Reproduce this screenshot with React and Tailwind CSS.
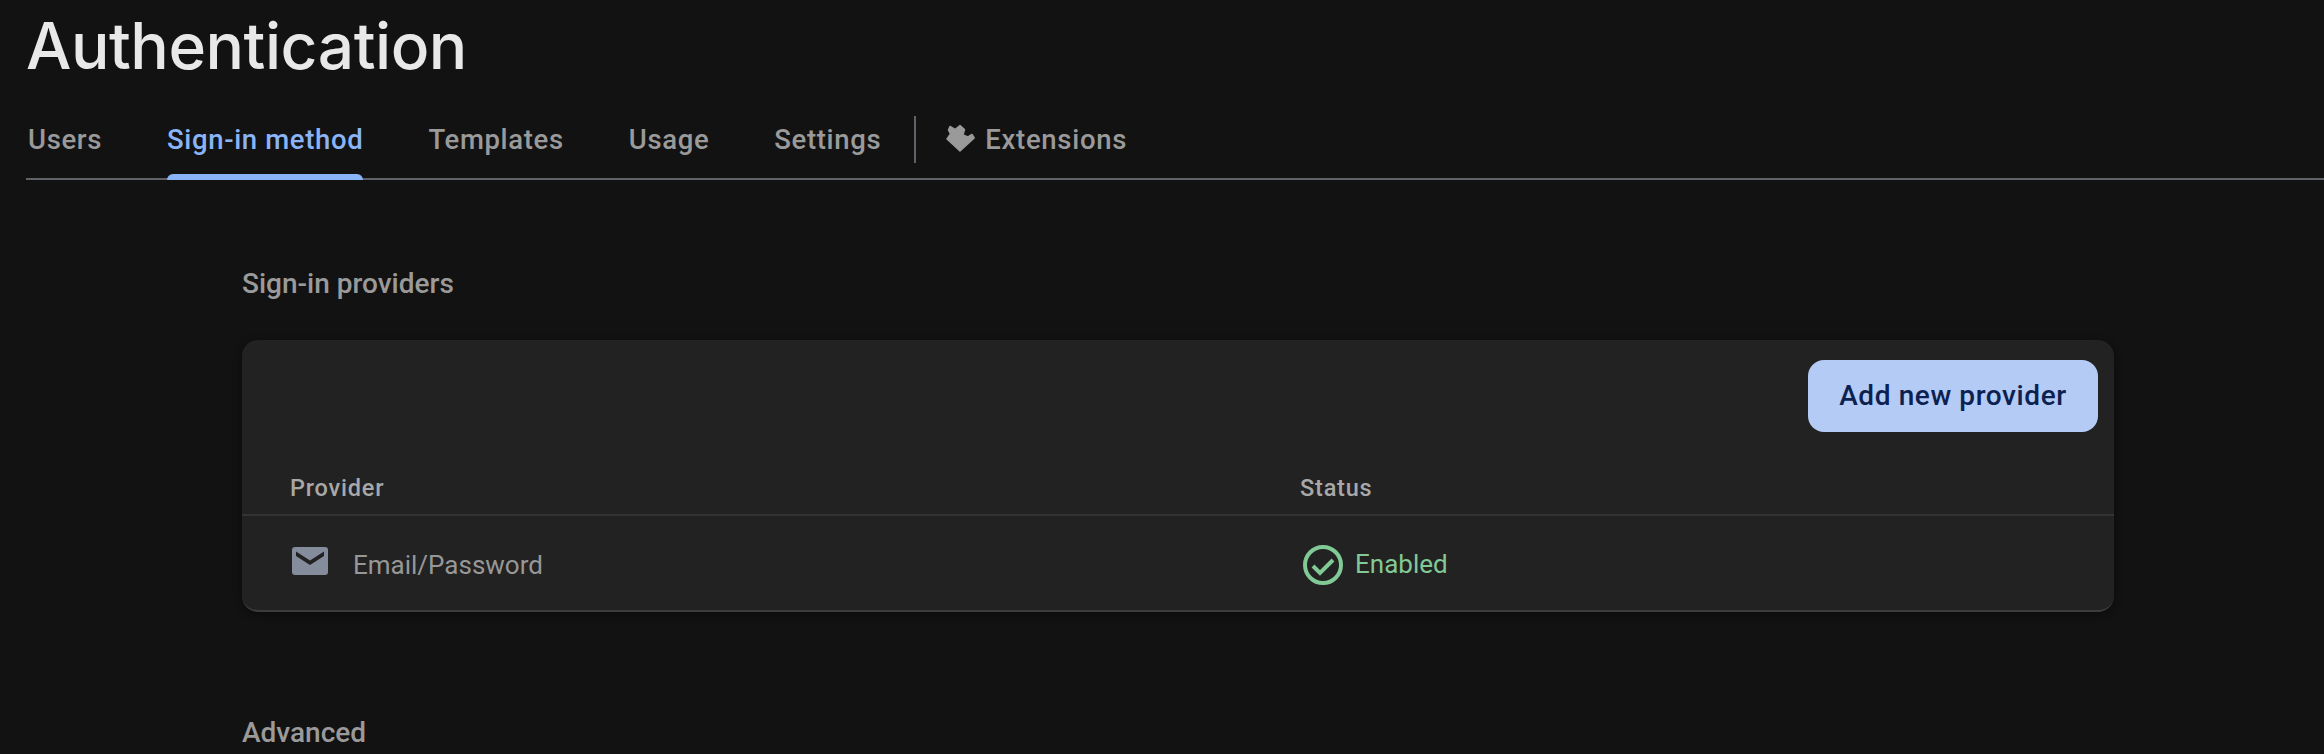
import React from 'react';

const tabs = ['Users', 'Sign-in method', 'Templates', 'Usage', 'Settings'];

const App = () => {
  return (
    <div className="h-[754px] overflow-hidden bg-[#121212] font-['Roboto',sans-serif]">
      {/* Header */}
      <div className="pl-[26px]">
        <h1 className="h-[82px] pt-[5px] text-[64px] leading-[82px] font-[450] tracking-[-0.45px] text-[#e8e8e8] font-['Inter',sans-serif]">
          Authentication
        </h1>

        {/* Tabs */}
        <div className="mt-[16px] flex h-[82px] items-stretch border-b-2 border-[#5f6368]">
          {tabs.map((tab) => (
            <div
              key={tab}
              className={`relative mr-[65px] flex items-center text-[27.5px] font-medium tracking-[0.65px] first:ml-[2px] ${tab === 'Sign-in method' ? 'text-[#8ab4f8]' : 'text-[#9a9a9a]'}`}
            >
              <span className="pt-[3px]">{tab}</span>
              {tab === 'Sign-in method' && (
                <span className="absolute -bottom-[2px] left-0 right-0 h-[6px] rounded-t-[6px] bg-[#8ab4f8]" />
              )}
            </div>
          ))}
          <div className="-ml-[32px] mt-[18px] mb-[15px] w-[2px] bg-[#5f6368]" />
          <div className="ml-[30px] flex items-center gap-[10px] text-[27.5px] font-medium tracking-[0.7px] text-[#9a9a9a]">
            <svg width="29" height="28" viewBox="0 0 29 28" fill="#9a9a9a" stroke="#9a9a9a" strokeWidth="1.5" strokeLinejoin="round">
              <path d="M4 2.500L9 5.500L14 1.500L18.500 5.500L17 11L22 13L26 10.500L28.200 14L14 27L1 15L4.500 10L2.500 6Z" />
            </svg>
            <span className="pt-[3px]">Extensions</span>
          </div>
        </div>
      </div>

      {/* Content */}
      <div className="mt-[88px] ml-[242px] w-[1872px]">
        <h2 className="text-[28px] leading-[32px] font-medium text-[#9a9a9a]">Sign-in providers</h2>

        <div className="mt-[40px] h-[272px] rounded-[16px] border-b-2 border-[#3c3c3c] bg-[#222222] shadow-[0_2px_8px_rgba(0,0,0,0.4)]">
          <div className="flex justify-end pt-[20px] pr-[16px]">
            <button className="h-[72px] w-[290px] rounded-[16px] bg-[#b3cbf5] text-[28px] font-medium tracking-[0.6px] text-[#0d2150]">
              Add new provider
            </button>
          </div>

          <div className="mt-[38px] flex h-[46px] items-center border-b-2 border-[#333333] pb-[6px] text-[23.5px] font-medium tracking-[0.8px] text-[#a8a8a8]">
            <div className="ml-[48px] w-[1010px]">Provider</div>
            <div>Status</div>
          </div>

          <div className="flex h-[94px] items-center pt-[3px] text-[26px] text-[#979797]">
            <div className="flex w-[1058px] items-center">
              <svg className="ml-[50px] mb-[8px]" width="36" height="28" viewBox="0 0 36 28" fill="#858c9c">
                <path d="M3 0h30a3 3 0 0 1 3 3v22a3 3 0 0 1-3 3H3a3 3 0 0 1-3-3V3a3 3 0 0 1 3-3zM4 4.500V9L18 18L32 9V4.500L18 13.500Z" fillRule="evenodd" />
              </svg>
              <span className="ml-[25px] pt-[2px]">Email/Password</span>
            </div>
            <div className="ml-[3px] flex items-center gap-[12px] text-[#81c995]">
              <svg width="40" height="40" viewBox="0 0 40 40" fill="none" stroke="#81c995">
                <circle cx="20" cy="20" r="18" strokeWidth="4" />
                <path d="M10 21L17 28L30 15" strokeWidth="4" />
              </svg>
              <span>Enabled</span>
            </div>
          </div>
        </div>

        <h2 className="mt-[105px] text-[28px] leading-[32px] font-medium text-[#9a9a9a]">Advanced</h2>
      </div>
    </div>
  );
};

export default App;
